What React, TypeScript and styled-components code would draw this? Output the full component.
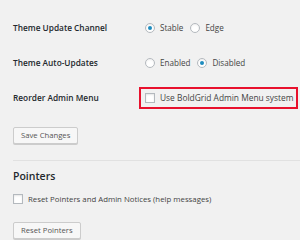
import type { FC } from 'react';
import styled, { createGlobalStyle } from 'styled-components';

const GlobalStyle = createGlobalStyle`
    html, body {
        margin: 0;
        padding: 0;
        background: #f1f1f1;
    }

    body {
        font-family: "Open Sans", "Liberation Sans", sans-serif;
        color: #23282d;
        width: 300px;
        height: 240px;
        overflow: hidden;
    }
`;

const StyledPage = styled.div`
    padding: 10px 0 0 13px;
`;

const StyledRow = styled.div`
    display: flex;
    align-items: center;
    height: 35px;
    white-space: nowrap;
`;

const StyledLabel = styled.div`
    width: 132px;
    flex-shrink: 0;
    font-size: 8.3px;
    font-weight: 600;
    color: #23282d;
`;

const StyledOptions = styled.div`
    display: flex;
    align-items: center;
    gap: 7px;
`;

const StyledOption = styled.label`
    display: inline-flex;
    align-items: center;
    gap: 5px;
    font-size: 8.1px;
    color: #444;
`;

const StyledRadio = styled.span<{ $checked?: boolean }>`
    width: 10px;
    height: 10px;
    box-sizing: border-box;
    border-radius: 50%;
    border: 1px solid #b4b9be;
    background: #fff;
    box-shadow: inset 0 1px 2px rgba(0, 0, 0, 0.07);
    display: inline-flex;
    align-items: center;
    justify-content: center;

    &::after {
        content: '';
        width: 4px;
        height: 4px;
        border-radius: 50%;
        background: ${({ $checked }) => $checked ? '#1e8cbe' : 'transparent'};
    }
`;

const StyledCheckbox = styled.span`
    width: 10px;
    height: 10px;
    box-sizing: border-box;
    border: 1px solid #b4b9be;
    background: #fff;
    box-shadow: inset 0 1px 2px rgba(0, 0, 0, 0.1);
    flex-shrink: 0;
`;

const StyledHighlight = styled.div`
    display: inline-flex;
    align-items: center;
    flex-shrink: 0;
    height: 22px;
    box-sizing: border-box;
    margin-left: -6px;
    padding: 0 2px 0 4px;
    border: 2px solid #e8112d;
`;

const StyledCheckLabel = styled.label<{ $size: number }>`
    display: inline-flex;
    align-items: center;
    gap: 5px;
    white-space: nowrap;
    font-size: ${({ $size }) => $size}px;
    color: #444;
`;

const StyledButtonWrap = styled.div<{ $top: number }>`
    margin-top: ${({ $top }) => $top}px;
`;

const StyledButton = styled.button`
    display: block;
    height: 17px;
    padding: 0 7px;
    border: 1px solid #ccc;
    border-radius: 2px;
    background: #f7f7f7;
    box-shadow: 0 1px 0 #ccc;
    font-family: inherit;
    font-size: 7.7px;
    color: #555;
    line-height: 15px;
`;

const StyledDivider = styled.hr`
    margin: 16px 0 0;
    border: 0;
    border-top: 1px solid #e1e1e1;
`;

const StyledHeading = styled.h2`
    margin: 8px 0 0;
    font-size: 10.5px;
    line-height: 14px;
    font-weight: 600;
    color: #23282d;
`;

const StyledPointerRow = styled.div`
    margin-top: 8.5px;
    height: 14px;
    display: flex;
    align-items: center;
`;

interface IRadioRowProps {
    label: string;
    options: string[];
    selected: string;
}

const RadioRow: FC<IRadioRowProps> = ({ label, options, selected }) => (
    <StyledRow>
        <StyledLabel>{label}</StyledLabel>
        <StyledOptions>
            {options.map(option => (
                <StyledOption key={option}>
                    <StyledRadio $checked={option === selected} />
                    {option}
                </StyledOption>
            ))}
        </StyledOptions>
    </StyledRow>
);

const App: FC = () => {
    return (
        <>
            <GlobalStyle />
            <StyledPage>
                <RadioRow label="Theme Update Channel" options={['Stable', 'Edge']} selected="Stable" />
                <RadioRow label="Theme Auto-Updates" options={['Enabled', 'Disabled']} selected="Disabled" />
                <StyledRow>
                    <StyledLabel>Reorder Admin Menu</StyledLabel>
                    <StyledHighlight>
                        <StyledCheckLabel $size={8.4}>
                            <StyledCheckbox />
                            Use BoldGrid Admin Menu system
                        </StyledCheckLabel>
                    </StyledHighlight>
                </StyledRow>

                <StyledButtonWrap $top={12}>
                    <StyledButton>Save Changes</StyledButton>
                </StyledButtonWrap>

                <StyledDivider />

                <StyledHeading>Pointers</StyledHeading>

                <StyledPointerRow>
                    <StyledCheckLabel $size={7.8}>
                        <StyledCheckbox />
                        Reset Pointers and Admin Notices (help messages)
                    </StyledCheckLabel>
                </StyledPointerRow>

                <StyledButtonWrap $top={16.5}>
                    <StyledButton>Reset Pointers</StyledButton>
                </StyledButtonWrap>
            </StyledPage>
        </>
    );
}

export default App;
